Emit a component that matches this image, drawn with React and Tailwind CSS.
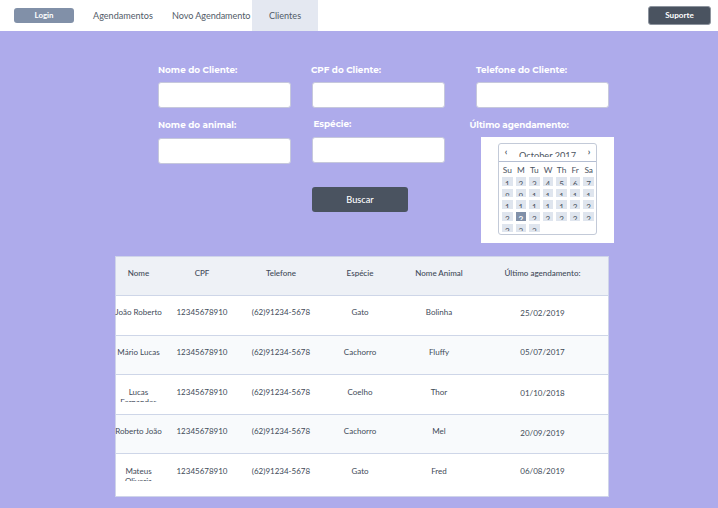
import React from "react";

const COLUMNS = "grid grid-cols-[46px_81px_77px_81px_77px_130px]";

const clients = [
  { nome: ["João Roberto"], fone: "(62)91234-5678", especie: "Gato", animal: "Bolinha", data: "25/02/2019", row: "h-[40px] bg-white pt-[11px]", shift: "pt-[1px]" },
  { nome: ["Mário Lucas"], fone: "(62)91234-5678", especie: "Cachorro", animal: "Fluffy", data: "05/07/2017", row: "h-[39px] bg-[#f8fafc] pt-[11px]", shift: "pt-0" },
  { nome: ["Lucas", "Fernandes"], fone: "(62)91234-5678", especie: "Coelho", animal: "Thor", data: "01/10/2018", row: "h-[40px] bg-white pt-3", shift: "pt-[1px]" },
  { nome: ["Roberto João"], fone: "(62)91234-5678", especie: "Cachorro", animal: "Mel", data: "20/09/2019", row: "h-[39px] bg-[#f8fafc] pt-[11px]", shift: "pt-[2px]" },
  { nome: ["Mateus", "Oliveria"], fone: "(62)91234-5678", especie: "Gato", animal: "Fred", data: "06/08/2019", row: "h-[42px] bg-white pt-3", shift: "pt-0" },
];

const weekdays = ["Su", "M", "Tu", "W", "Th", "Fr", "Sa"];
const weeks = [
  ["1", "2", "3", "4", "5", "6", "7"],
  ["8", "9", "1", "1", "1", "1", "1"],
  ["1", "1", "1", "1", "1", "2", "2"],
  ["2", "2", "2", "2", "2", "2", "2"],
  ["2", "3", "3"],
];

function Label({ children, className = "" }) {
  return (
    <label className={`block h-3 whitespace-nowrap font-['Montserrat','Inter',sans-serif] text-[8.8px] leading-3 font-bold text-white ${className}`}>
      {children}
    </label>
  );
}

function Field({ label, labelClass = "", inputClass = "" }) {
  return (
    <div className="w-[133px]">
      <Label className={labelClass}>{label}</Label>
      <input className={`block h-[26px] w-[133px] rounded-[3px] border border-[#c6c8dc] bg-white ${inputClass}`} />
    </div>
  );
}

function Calendar() {
  return (
    <div className="mt-1.5 ml-[5px] h-[106px] w-[133px] bg-white pt-1.5 pl-[17px]">
      <div className="h-[92px] w-[99px] rounded-[3px] border border-[#c3cad8] text-[#4b5461]">
        <div className="flex h-[18px] items-start border-b border-[#b4bed2]">
          <span className="w-[14px] pt-[2px] text-center text-[9px] leading-3 font-bold">‹</span>
          <div className="mt-[5px] h-[8px] flex-1 overflow-hidden text-center text-[9.2px] leading-[13px] whitespace-nowrap">October 2017</div>
          <span className="w-[14px] pt-[2px] text-center text-[9px] leading-3 font-bold">›</span>
        </div>
        <div className="ml-[3px] grid h-[15px] w-[92px] grid-cols-7 gap-x-[3px] pt-[2px] text-[8.4px] leading-3">
          {weekdays.map((d) => (
            <span key={d} className="flex justify-center">{d}</span>
          ))}
        </div>
        <div className="ml-[3px] flex w-[92px] flex-col gap-[3.2px]">
          {weeks.map((week, w) => (
            <div key={w} className="grid grid-cols-7 gap-x-[3px]">
              {week.map((day, d) => (
                <div
                  key={d}
                  className={`h-[8.5px] pt-[2px] text-center text-[8.2px] leading-[10px] ${
                    w === 3 && d === 1 ? "bg-[#8190a8] font-bold text-white" : "bg-[#dfe5ee]"
                  }`}
                >
                  <span className="block h-[5.5px] overflow-hidden">{day}</span>
                </div>
              ))}
            </div>
          ))}
        </div>
      </div>
    </div>
  );
}

export default function App() {
  return (
    <div className="h-[508px] w-[718px] overflow-hidden bg-[#aeabeb] font-['Lato',sans-serif] text-[#414a58]">
      <header className="flex h-[31px] bg-white text-[9.1px] leading-[32px] text-[#525b68]">
        <button className="mt-2 ml-[14px] h-[15px] w-[60px] rounded-[3px] bg-[#8190a8] text-[7.9px] leading-[15px] font-bold text-white">Login</button>
        <nav className="flex whitespace-nowrap">
          <a className="ml-[19px] w-[79px]">Agendamentos</a>
          <a className="w-[80px] tracking-[-0.07px]">Novo Agendamento</a>
          <a className="w-[66px] bg-[#e4e8f1] text-center">Clientes</a>
        </nav>
        <button className="mt-1.5 mr-[7px] ml-auto h-[19px] w-[63px] rounded-[3px] border border-[#8d949e] bg-[#4a5360] text-[8.1px] leading-[17px] font-bold text-white">Suporte</button>
      </header>

      <form className="flex h-[225px] pt-[33px] pl-[158px]">
        <div className="w-[154px]">
          <Field label="Nome do Cliente:" inputClass="mt-1.5" />
          <div className="h-[11px]" />
          <Field label="Nome do animal:" inputClass="mt-[7px]" />
        </div>
        <div className="w-[164px]">
          <Field label="CPF do Cliente:" labelClass="-ml-px" inputClass="mt-1.5" />
          <div className="h-[10px]" />
          <Field label="Espécie:" labelClass="ml-[1.5px]" inputClass="mt-[7px]" />
          <button type="button" className="mt-6 block h-[25px] w-24 rounded-[3px] bg-[#4a5360] text-[9.2px] leading-[24px] font-medium text-white">Buscar</button>
        </div>
        <div className="w-[140px]">
          <Field label="Telefone do Cliente:" inputClass="mt-1.5" />
          <Label className="-ml-[6.5px] mt-[11px] tracking-[-0.1px]">Último agendamento:</Label>
          <Calendar />
        </div>
      </form>

      <section className="ml-[115px] h-[241px] w-[494px] border border-[#cfd4ea] bg-white text-[8px] leading-[10px] whitespace-nowrap">
        <div className={`${COLUMNS} h-[39px] border-b border-[#ced6e8] bg-[#eef1f6] pt-[11px] font-medium`}>
          {["Nome", "CPF", "Telefone", "Espécie", "Nome Animal", "Último agendamento:"].map((h) => (
            <span key={h} className="flex justify-center pr-px">{h}</span>
          ))}
        </div>
        {clients.map((c, i) => (
          <div key={i} className={`${COLUMNS} ${c.row} ${i < 4 ? "border-b border-[#ced6e8]" : ""}`}>
            <div className="-ml-px flex h-[15px] flex-col items-center overflow-hidden">
              {c.nome.map((n) => <span key={n}>{n}</span>)}
            </div>
            <span className="flex justify-center pr-px">12345678910</span>
            <span className="flex justify-center pr-px">{c.fone}</span>
            <span className="flex justify-center pr-px">{c.especie}</span>
            <span className="flex justify-center pr-px">{c.animal}</span>
            <span className={`flex justify-center pr-px ${c.shift}`}>{c.data}</span>
          </div>
        ))}
      </section>
    </div>
  );
}
